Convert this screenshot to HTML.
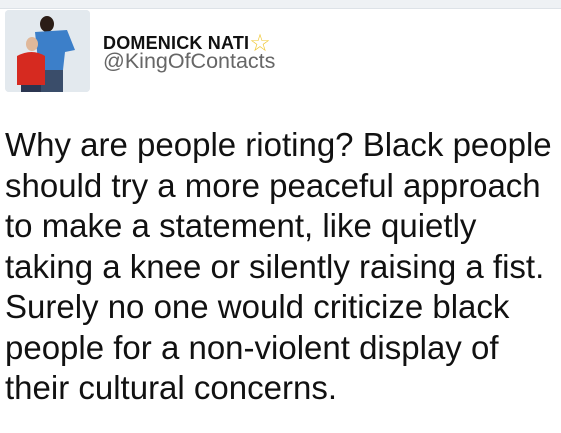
<!DOCTYPE html>
<html><head><style>
body{margin:0;width:561px;height:433px;background:#fff;overflow:hidden;font-family:"Liberation Sans",Arial,sans-serif;position:relative}
.top{position:absolute;left:0;top:0;width:561px;height:8px;background:#eef1f4;border-bottom:1px solid #dde2e7}
.av{position:absolute;left:5px;top:10px;width:85px;height:82px;border-radius:4px;background:#dfe6ec;overflow:hidden}
.name{position:absolute;left:103px;top:27px;font-size:18px;font-weight:bold;color:#111;letter-spacing:0.2px}
.handle{position:absolute;left:103px;top:49px;font-size:21.5px;color:#666}
.txt{position:absolute;left:5px;top:125px;font-size:33px;line-height:40.5px;color:#111;white-space:pre}
</style></head><body>
<div class="top"></div>
<div class="av"><svg width="85" height="82">
<rect width="85" height="82" fill="#e3e9ee"/>
<ellipse cx="42" cy="14" rx="7" ry="8" fill="#2b1d16"/>
<path d="M30 22 L62 20 L70 40 L60 42 L58 60 L34 60 Z" fill="#3c7fc9"/>
<path d="M34 60 L58 60 L58 82 L34 82 Z" fill="#3a4d6a"/>
<ellipse cx="27" cy="34" rx="6" ry="7" fill="#e0b89a"/>
<path d="M12 46 Q27 38 40 46 L40 75 L12 75 Z" fill="#d62a20"/>
<path d="M16 75 L36 75 L36 82 L16 82 Z" fill="#2b3550"/>
</svg></div>
<div class="name">DOMENICK NATI<span style="color:#f0c93a;font-size:24px;font-weight:normal;position:relative;top:2px">☆</span></div>
<div class="handle">@KingOfContacts</div>
<div class="txt">Why are people rioting? Black people
should try a more peaceful approach
to make a statement, like quietly
taking a knee or silently raising a fist.
Surely no one would criticize black
people for a non-violent display of
their cultural concerns.</div>
</body></html>
